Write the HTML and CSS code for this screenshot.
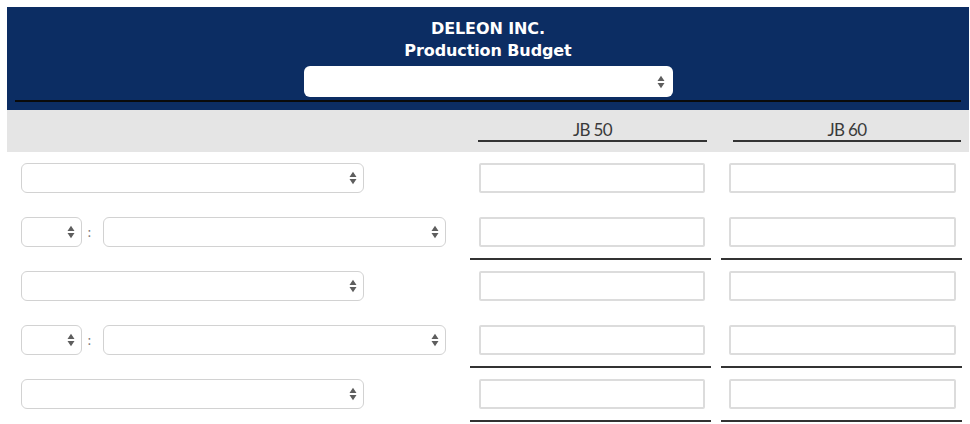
FILE: index.html
```html
<!DOCTYPE html>
<html lang="en">
<head>
<meta charset="utf-8">
<title>DELEON INC. Production Budget</title>
<link rel="stylesheet" href="styles.css">
</head>
<body>
<div class="sheet">
  <div class="header">
    <div class="title">DELEON INC.</div>
    <div class="title">Production Budget</div>
    <div class="select select-head">
      <svg class="arrows" width="8" height="14" viewBox="0 0 8 14"><path d="M0.5 6 L4 0.8 L7.5 6 Z M0.5 8 L7.5 8 L4 13.2 Z"/></svg>
    </div>
    <div class="rule"></div>
  </div>

  <div class="colhead grid">
    <div></div>
    <div class="coltitle c2">JB 50</div>
    <div class="coltitle c3">JB 60</div>
  </div>

  <div class="grid body">
    <div class="label"><div class="select wide"><svg class="arrows" width="8" height="14" viewBox="0 0 8 14"><path d="M0.5 6 L4 0.8 L7.5 6 Z M0.5 8 L7.5 8 L4 13.2 Z"/></svg></div></div>
    <div class="cell c2"><div class="input"></div></div>
    <div class="cell c3"><div class="input"></div></div>

    <div class="label pair"><div class="select small"><svg class="arrows" width="8" height="14" viewBox="0 0 8 14"><path d="M0.5 6 L4 0.8 L7.5 6 Z M0.5 8 L7.5 8 L4 13.2 Z"/></svg></div><span class="colon">:</span><div class="select wide"><svg class="arrows" width="8" height="14" viewBox="0 0 8 14"><path d="M0.5 6 L4 0.8 L7.5 6 Z M0.5 8 L7.5 8 L4 13.2 Z"/></svg></div></div>
    <div class="cell c2 total"><div class="input"></div></div>
    <div class="cell c3 total"><div class="input"></div></div>

    <div class="label"><div class="select wide"><svg class="arrows" width="8" height="14" viewBox="0 0 8 14"><path d="M0.5 6 L4 0.8 L7.5 6 Z M0.5 8 L7.5 8 L4 13.2 Z"/></svg></div></div>
    <div class="cell c2"><div class="input"></div></div>
    <div class="cell c3"><div class="input"></div></div>

    <div class="label pair"><div class="select small"><svg class="arrows" width="8" height="14" viewBox="0 0 8 14"><path d="M0.5 6 L4 0.8 L7.5 6 Z M0.5 8 L7.5 8 L4 13.2 Z"/></svg></div><span class="colon">:</span><div class="select wide"><svg class="arrows" width="8" height="14" viewBox="0 0 8 14"><path d="M0.5 6 L4 0.8 L7.5 6 Z M0.5 8 L7.5 8 L4 13.2 Z"/></svg></div></div>
    <div class="cell c2 total"><div class="input"></div></div>
    <div class="cell c3 total"><div class="input"></div></div>

    <div class="label"><div class="select wide"><svg class="arrows" width="8" height="14" viewBox="0 0 8 14"><path d="M0.5 6 L4 0.8 L7.5 6 Z M0.5 8 L7.5 8 L4 13.2 Z"/></svg></div></div>
    <div class="cell c2 total"><div class="input"></div></div>
    <div class="cell c3 total"><div class="input"></div></div>
  </div>
</div>
</body>
</html>
```
FILE: styles.css
```css
* { box-sizing: border-box; }
html, body { margin: 0; padding: 0; background: #ffffff; }
body { font-family: "DejaVu Sans", Verdana, sans-serif; overflow: hidden; }

.sheet {
  width: 962px;
  margin: 7px 0 0 7px;
}

.header {
  background: #0c2d63;
  padding: 11px 8px 8px 8px;
  display: flex;
  flex-direction: column;
  align-items: center;
}
.title {
  color: #ffffff;
  font-weight: bold;
  font-size: 16px;
  line-height: 22px;
  letter-spacing: -0.1px;
}
.rule {
  align-self: stretch;
  height: 2px;
  background: #0a0a0a;
  margin-top: 3px;
}

.select {
  background: #ffffff;
  border: 1.5px solid #d2d2d2;
  border-radius: 6px;
  height: 30px;
  display: flex;
  align-items: center;
  justify-content: flex-end;
  padding-right: 6px;
}
.select-head {
  width: 369px;
  height: 31px;
  border: none;
  margin-top: 4px;
  padding-right: 8px;
}
.arrows { fill: #5e5e5e; display: block; }

.grid {
  display: grid;
  grid-template-columns: 453px 241px 241px;
  column-gap: 10px;
  padding-right: 7px;
}

.colhead {
  background: #e5e5e5;
  padding-top: 9px;
  padding-bottom: 10px;
}
.coltitle {
  font-family: Lato, "Open Sans", sans-serif;
  font-size: 17px;
  line-height: 21px;
  color: #3a3a3a;
  text-align: center;
  border-bottom: 2px solid #333333;
  letter-spacing: -0.6px;
}
.coltitle.c2 { margin: 0 4px 0 8px; }
.coltitle.c3 { margin: 0 1px 0 12px; }

.label {
  padding: 11px 0 0 14px;
  display: flex;
  align-items: flex-start;
}
.select.wide { width: 343px; }
.select.small { width: 61px; }
.colon {
  width: 21px;
  padding-left: 5px;
  height: 30px;
  line-height: 30px;
  font-size: 14px;
  color: #808080;
}

.cell {
  padding: 11px 0 11px 0;
  border-bottom: 2px solid transparent;
}
.cell.total { border-bottom-color: #333333; }
.cell.c2 .input { margin: 0 6px 0 9px; }
.cell.c3 .input { margin: 0 6px 0 8px; }
.input {
  height: 30px;
  background: #ffffff;
  border: 2px solid #dcdcdc;
  border-radius: 2px;
}
```
